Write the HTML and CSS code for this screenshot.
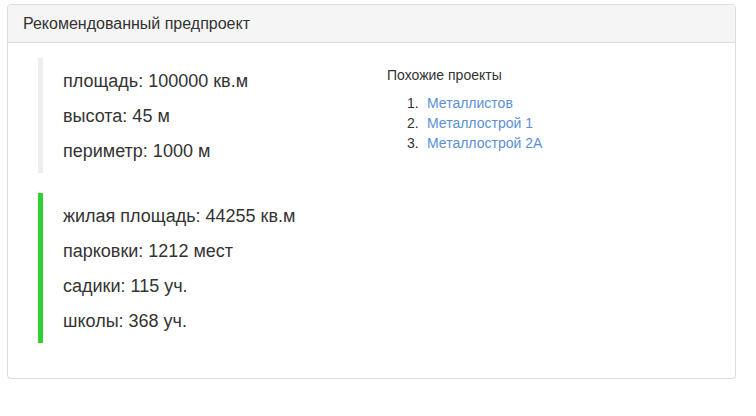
FILE: index.html
```html
<!DOCTYPE html>
<html lang="ru">
<head>
<meta charset="utf-8">
<title>Рекомендованный предпроект</title>
<link rel="stylesheet" href="styles.css">
</head>
<body>
<div class="panel">
  <div class="panel-heading">Рекомендованный предпроект</div>
  <div class="panel-body">
    <div class="col col-left">
      <blockquote class="quote">
        <p>площадь: 100000 кв.м</p>
        <p>высота: 45 м</p>
        <p>периметр: 1000 м</p>
      </blockquote>
      <blockquote class="quote quote-green">
        <p>жилая площадь: 44255 кв.м</p>
        <p>парковки: 1212 мест</p>
        <p>садики: 115 уч.</p>
        <p>школы: 368 уч.</p>
      </blockquote>
    </div>
    <div class="col col-right">
      <h5 class="similar-title">Похожие проекты</h5>
      <ol class="similar-list">
        <li><a href="#">Металлистов</a></li>
        <li><a href="#">Металлострой 1</a></li>
        <li><a href="#">Металлострой 2А</a></li>
      </ol>
    </div>
  </div>
</div>
</body>
</html>
```
FILE: styles.css
```css
* { box-sizing: border-box; }
html, body {
  margin: 0;
  padding: 0;
  background: #fff;
}
body {
  font-family: "Liberation Sans", Arial, Helvetica, sans-serif;
  font-size: 14px;
  line-height: 20px;
  color: #333;
}
.panel {
  margin: 4px 0 0 7px;
  width: 729px;
  border: 1px solid #ddd;
  border-radius: 4px;
  background: #fff;
  box-shadow: 0 1px 1px rgba(0,0,0,.05);
}
.panel-heading {
  padding: 10px 15px;
  font-size: 16px;
  line-height: 17px;
  background: #f5f5f5;
  border-bottom: 1px solid #ddd;
  border-radius: 3px 3px 0 0;
  color: #333;
}
.panel-body {
  padding: 15px;
  display: grid;
  grid-template-columns: 364px 1fr;
}
.col-left {
  padding-left: 15px;
}
.quote {
  margin: 0 0 20px 0;
  padding: 11px 20px 9px;
  border-left: 5px solid #eee;
  font-size: 18px;
  line-height: 25px;
}
.quote p {
  margin: 0 0 10px;
}
.quote p:last-child { margin-bottom: 0; }
.quote-green {
  border-left-color: #32cd32;
}
.similar-title {
  margin: 10px 0 10px;
  font-size: 14px;
  font-weight: normal;
  line-height: 15px;
}
.similar-list {
  margin: 0;
  padding-left: 40px;
  list-style: none;
  counter-reset: item;
}
.similar-list li {
  counter-increment: item;
}
.similar-list li::before {
  content: counter(item) ".";
  display: inline-block;
  width: 20px;
  margin-left: -20px;
}
.similar-list a {
  color: #5b8fd5;
  text-decoration: none;
}
```
